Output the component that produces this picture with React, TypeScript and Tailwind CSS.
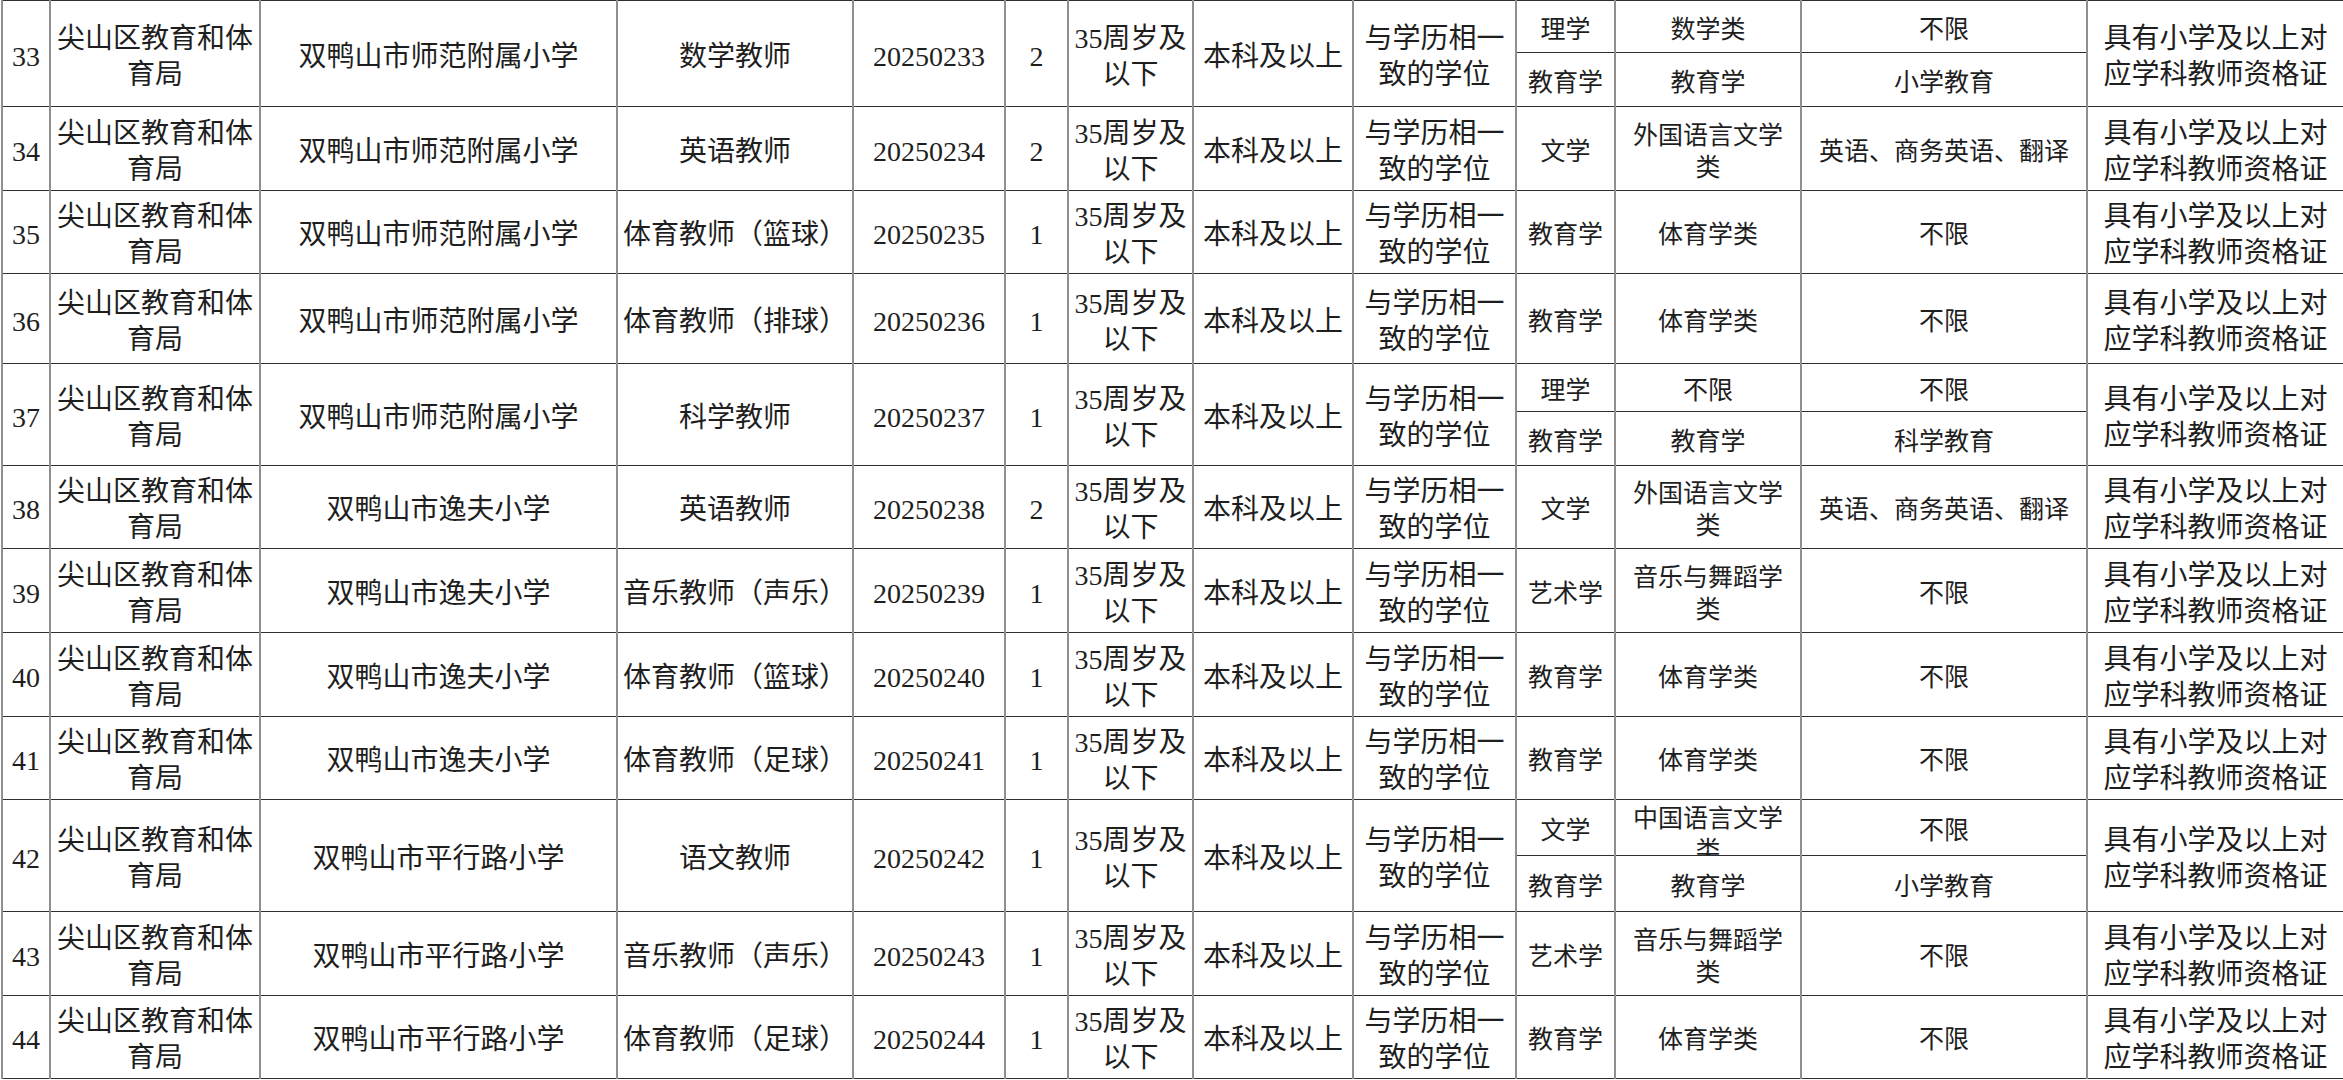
import React from "react";

type Sub = { cat: string[]; sub: string[]; major: string[]; clip?: boolean };

type Row = {
  no: string;
  school: string;
  post: string;
  code: string;
  num: string;
  h: string[];
  subs: Sub[];
};

const one = (cat: string, sub: string[], major: string): Sub[] => [{ cat: [cat], sub, major: [major] }];

const rows: Row[] = [
  {
    no: "33",
    school: "双鸭山市师范附属小学",
    post: "数学教师",
    code: "20250233",
    num: "2",
    h: ["h-[52px]", "h-[54px]"],
    subs: [
      { cat: ["理学"], sub: ["数学类"], major: ["不限"] },
      { cat: ["教育学"], sub: ["教育学"], major: ["小学教育"] },
    ],
  },
  { no: "34", school: "双鸭山市师范附属小学", post: "英语教师", code: "20250234", num: "2", h: ["h-[84px]"], subs: one("文学", ["外国语言文学", "类"], "英语、商务英语、翻译") },
  { no: "35", school: "双鸭山市师范附属小学", post: "体育教师（篮球）", code: "20250235", num: "1", h: ["h-[83px]"], subs: one("教育学", ["体育学类"], "不限") },
  { no: "36", school: "双鸭山市师范附属小学", post: "体育教师（排球）", code: "20250236", num: "1", h: ["h-[90px]"], subs: one("教育学", ["体育学类"], "不限") },
  {
    no: "37",
    school: "双鸭山市师范附属小学",
    post: "科学教师",
    code: "20250237",
    num: "1",
    h: ["h-[48px]", "h-[54px]"],
    subs: [
      { cat: ["理学"], sub: ["不限"], major: ["不限"] },
      { cat: ["教育学"], sub: ["教育学"], major: ["科学教育"] },
    ],
  },
  { no: "38", school: "双鸭山市逸夫小学", post: "英语教师", code: "20250238", num: "2", h: ["h-[83px]"], subs: one("文学", ["外国语言文学", "类"], "英语、商务英语、翻译") },
  { no: "39", school: "双鸭山市逸夫小学", post: "音乐教师（声乐）", code: "20250239", num: "1", h: ["h-[84px]"], subs: one("艺术学", ["音乐与舞蹈学", "类"], "不限") },
  { no: "40", school: "双鸭山市逸夫小学", post: "体育教师（篮球）", code: "20250240", num: "1", h: ["h-[84px]"], subs: one("教育学", ["体育学类"], "不限") },
  { no: "41", school: "双鸭山市逸夫小学", post: "体育教师（足球）", code: "20250241", num: "1", h: ["h-[83px]"], subs: one("教育学", ["体育学类"], "不限") },
  {
    no: "42",
    school: "双鸭山市平行路小学",
    post: "语文教师",
    code: "20250242",
    num: "1",
    h: ["h-[56px]", "h-[56px]"],
    subs: [
      { cat: ["文学"], sub: ["中国语言文学", "类"], major: ["不限"], clip: true },
      { cat: ["教育学"], sub: ["教育学"], major: ["小学教育"] },
    ],
  },
  { no: "43", school: "双鸭山市平行路小学", post: "音乐教师（声乐）", code: "20250243", num: "1", h: ["h-[84px]"], subs: one("艺术学", ["音乐与舞蹈学", "类"], "不限") },
  { no: "44", school: "双鸭山市平行路小学", post: "体育教师（足球）", code: "20250244", num: "1", h: ["h-[83px]"], subs: one("教育学", ["体育学类"], "不限") },
];

const widths = [
  "w-[48px]",
  "w-[210px]",
  "w-[357px]",
  "w-[236px]",
  "w-[152px]",
  "w-[63px]",
  "w-[125px]",
  "w-[160px]",
  "w-[163px]",
  "w-[99px]",
  "w-[186px]",
  "w-[286px]",
  "w-[257px]",
];

const cell =
  "border-x-2 border-x-[#8f8f8f] border-y border-y-[#2e2e2e] p-0 text-center align-middle whitespace-nowrap";
const big = `${cell} pt-[6px] text-[28px] leading-[36px]`;
const small = `${cell} pt-[6px] text-[25px] leading-[32px]`;

function Lines({ lines }: { lines: string[] }) {
  return (
    <>
      {lines.map((l, i) => (
        <div key={i}>{l}</div>
      ))}
    </>
  );
}

function SubCells({ s }: { s: Sub }) {
  return (
    <>
      <td className={small}>
        <Lines lines={s.cat} />
      </td>
      {s.clip ? (
        <td className={`${cell} align-top text-[25px] leading-[32px]`}>
          <div className="h-[55px] overflow-hidden pt-[3px]">
            <Lines lines={s.sub} />
          </div>
        </td>
      ) : (
        <td className={small}>
          <Lines lines={s.sub} />
        </td>
      )}
      <td className={small}>
        <Lines lines={s.major} />
      </td>
    </>
  );
}

function TableRow({ r }: { r: Row }) {
  const span = r.subs.length;
  return (
    <>
      <tr className={r.h[0]}>
        <td rowSpan={span} className={big}>
          {r.no}
        </td>
        <td rowSpan={span} className={big}>
          <Lines lines={["尖山区教育和体", "育局"]} />
        </td>
        <td rowSpan={span} className={big}>
          {r.school}
        </td>
        <td rowSpan={span} className={big}>
          {r.post}
        </td>
        <td rowSpan={span} className={big}>
          {r.code}
        </td>
        <td rowSpan={span} className={big}>
          {r.num}
        </td>
        <td rowSpan={span} className={big}>
          <Lines lines={["35周岁及", "以下"]} />
        </td>
        <td rowSpan={span} className={big}>
          本科及以上
        </td>
        <td rowSpan={span} className={big}>
          <Lines lines={["与学历相一", "致的学位"]} />
        </td>
        <SubCells s={r.subs[0]} />
        <td rowSpan={span} className={big}>
          <Lines lines={["具有小学及以上对", "应学科教师资格证"]} />
        </td>
      </tr>
      {r.subs.slice(1).map((s, i) => (
        <tr key={i} className={r.h[i + 1]}>
          <SubCells s={s} />
        </tr>
      ))}
    </>
  );
}

export default function App() {
  return (
    <div className="min-h-screen bg-white font-['Liberation_Serif','Noto_Sans_CJK_SC',serif] text-[#1e1e1e]">
      <table className="ml-px w-[2342px] table-fixed border-collapse">
        <colgroup>
          {widths.map((w, i) => (
            <col key={i} className={w} />
          ))}
        </colgroup>
        <tbody>
          {rows.map((r) => (
            <TableRow key={r.no} r={r} />
          ))}
        </tbody>
      </table>
    </div>
  );
}
